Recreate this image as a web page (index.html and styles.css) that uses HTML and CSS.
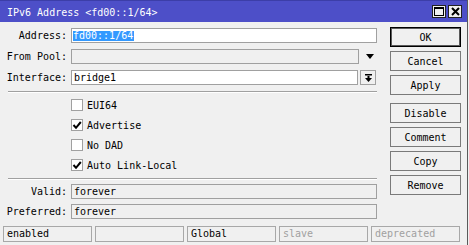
FILE: index.html
```html
<!DOCTYPE html>
<html>
<head>
<meta charset="utf-8">
<link rel="stylesheet" href="styles.css">
</head>
<body>
<div class="window">
  <div class="titlebar">
    <span class="title">IPv6 Address &lt;fd00::1/64&gt;</span>
    <div class="tbtns">
      <span class="tbtn"><svg width="10" height="9" viewBox="0 0 10 9"><rect x="0.5" y="0.5" width="9" height="8" fill="none" stroke="#000"/><rect x="0" y="0" width="10" height="2" fill="#000"/></svg></span>
      <span class="tbtn"><svg width="9" height="9" viewBox="0 0 9 9"><path d="M1 1 L8 8 M8 1 L1 8" stroke="#000" stroke-width="2"/></svg></span>
    </div>
  </div>
  <div class="main">
    <div class="form">
      <div class="row">
        <span class="lbl">Address:</span>
        <div class="input wide"><span class="sel">fd00::1/64</span></div>
      </div>
      <div class="row gap6">
        <span class="lbl">From Pool:</span>
        <div class="input pool ro"></div>
        <span class="dd"><svg width="8" height="5" viewBox="0 0 8 5"><path d="M0 0 H8 L4 5 Z" fill="#000"/></svg></span>
      </div>
      <div class="row gap6">
        <span class="lbl">Interface:</span>
        <div class="input iface">bridge1</div>
        <span class="ibtn"><svg width="7" height="8" viewBox="0 0 7 8"><rect x="0" y="0" width="7" height="1.5" fill="#000"/><rect x="2.5" y="2" width="2" height="3" fill="#000"/><path d="M0 4 H7 L3.5 8 Z" fill="#000"/></svg></span>
      </div>
      <div class="sep first"></div>
      <div class="checks">
        <div class="chk"><span class="box"></span><span class="clbl">EUI64</span></div>
        <div class="chk"><span class="box"><svg width="10" height="10" viewBox="0 0 10 10"><path d="M1.5 5 L4 7.8 L8.8 2" fill="none" stroke="#000" stroke-width="2"/></svg></span><span class="clbl">Advertise</span></div>
        <div class="chk"><span class="box"></span><span class="clbl">No DAD</span></div>
        <div class="chk"><span class="box"><svg width="10" height="10" viewBox="0 0 10 10"><path d="M1.5 5 L4 7.8 L8.8 2" fill="none" stroke="#000" stroke-width="2"/></svg></span><span class="clbl">Auto Link-Local</span></div>
      </div>
      <div class="sep second"></div>
      <div class="row gap4">
        <span class="lbl">Valid:</span>
        <div class="input wide ro">forever</div>
      </div>
      <div class="row gap5">
        <span class="lbl">Preferred:</span>
        <div class="input wide ro">forever</div>
      </div>
    </div>
    <div class="buttons">
      <div class="btn default">OK</div>
      <div class="btn">Cancel</div>
      <div class="btn">Apply</div>
      <div class="btn spaced">Disable</div>
      <div class="btn">Comment</div>
      <div class="btn">Copy</div>
      <div class="btn">Remove</div>
    </div>
  </div>
  <div class="status">
    <div class="cell">enabled</div>
    <div class="cell"></div>
    <div class="cell">Global</div>
    <div class="cell dim">slave</div>
    <div class="cell dim">deprecated</div>
  </div>
</div>
</body>
</html>
```
FILE: styles.css
```css
html, body {
  margin: 0;
  padding: 0;
  background: #f0f0f0;
}
body {
  font-family: "DejaVu Sans Mono", "Liberation Mono", monospace;
  font-size: 10px;
  color: #000;
}
.window {
  width: 467px;
  height: 245px;
  border-right: 1px solid #5a5a5a;
  display: flex;
  flex-direction: column;
  background: #f0f0f0;
}
.titlebar {
  height: 22px;
  box-sizing: border-box;
  border-top: 1px solid #3c3ea8;
  background: #4d4fc8;
  display: flex;
  align-items: center;
  padding-left: 7px;
  padding-right: 5px;
  color: #fff;
}
.title {
  padding-top: 2px;
}
.tbtns {
  margin-left: auto;
  display: flex;
  gap: 2px;
}
.tbtn {
  width: 14px;
  height: 13px;
  box-sizing: border-box;
  border: 1px solid #222;
  background: #f0f0f0;
  display: flex;
  align-items: center;
  justify-content: center;
}
.main {
  display: flex;
}
.form {
  padding: 6px 0 0 3px;
  width: 374px;
  display: flex;
  flex-direction: column;
}
.row {
  display: flex;
  align-items: center;
  height: 15px;
}
.gap6 { margin-top: 6px; }
.gap5 { margin-top: 5px; }
.gap4 { margin-top: 4px; }
.lbl {
  width: 64px;
  margin-right: 4px;
  text-align: right;
  white-space: nowrap;
}
.input {
  box-sizing: border-box;
  height: 15px;
  border: 1px solid #a0a0a0;
  background: #fff;
  padding-left: 2px;
  line-height: 13px;
  white-space: nowrap;
  overflow: hidden;
}
.input.ro {
  background: #f0f0f0;
}
.wide { width: 306px; }
.pool { width: 288px; }
.iface { width: 287px; }
.sel {
  display: inline-block;
  background: #3399ff;
  color: #fff;
  line-height: 10px;
  margin-left: -1px;
  padding-right: 1px;
}
.dd {
  display: flex;
  margin-left: 7px;
}
.ibtn {
  box-sizing: border-box;
  width: 16px;
  height: 15px;
  margin-left: 2px;
  border: 1px solid #a0a0a0;
  background: #f0f0f0;
  display: flex;
  align-items: center;
  justify-content: center;
}
.sep {
  margin-left: 5px;
  width: 369px;
  height: 0;
  border-top: 1px solid #a0a0a0;
  border-bottom: 1px solid #fff;
}
.sep.first { margin-top: 6px; }
.sep.second { margin-top: 7px; }
.checks {
  display: flex;
  flex-direction: column;
  gap: 8px;
  margin-top: 6px;
  padding-left: 68px;
}
.chk {
  display: flex;
  align-items: center;
  height: 12px;
}
.box {
  box-sizing: border-box;
  width: 12px;
  height: 12px;
  border: 1px solid #a0a0a0;
  background: #fff;
  display: flex;
  align-items: center;
  justify-content: center;
}
.clbl {
  margin-left: 4px;
}
.buttons {
  margin-left: 13px;
  padding-top: 5px;
  display: flex;
  flex-direction: column;
  gap: 4px;
}
.btn {
  box-sizing: border-box;
  width: 71px;
  height: 20px;
  border: 1px solid #7a7a7a;
  background: #f0f0f0;
  display: flex;
  align-items: center;
  justify-content: center;
}
.btn.default {
  border-color: #000;
  box-shadow: inset 0 0 0 1px #5a5a5a;
}
.btn.spaced {
  margin-top: 4px;
}
.status {
  margin-top: auto;
  padding: 0 0 3px 3px;
  display: flex;
  gap: 3px;
}
.cell {
  box-sizing: border-box;
  width: 89px;
  height: 16px;
  border: 1px solid #a8a8a8;
  padding-left: 3px;
  line-height: 14px;
  white-space: nowrap;
}
.cell.dim {
  color: #a0a0a0;
}
```
